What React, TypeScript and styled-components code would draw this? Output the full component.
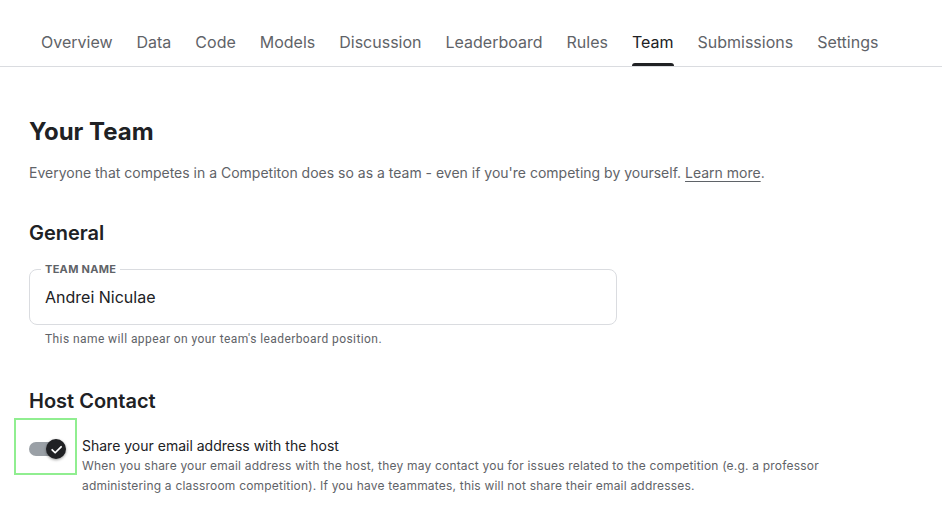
import React from "react";
import styled, { createGlobalStyle } from "styled-components";

const Global = createGlobalStyle`
  html, body { margin: 0; padding: 0; background: #fff; }
  body { font-family: Inter, "Noto Sans", sans-serif; color: #202124; }
  * { box-sizing: border-box; }
`;

const Page = styled.div`
  width: 942px;
  height: 525px;
  overflow: hidden;
  background: #fff;
`;

const TabBar = styled.nav`
  display: flex;
  align-items: stretch;
  height: 67px;
  padding: 0 0 0 41px;
  gap: 24px;
  border-bottom: 1px solid #dadce0;
`;

const Tab = styled.div<{ $active?: boolean }>`
  position: relative;
  display: flex;
  align-items: center;
  padding-top: 18px;
  font-size: 16px;
  color: ${(p) => (p.$active ? "#202124" : "#5f6368")};
  white-space: nowrap;
  &::after {
    content: "";
    display: ${(p) => (p.$active ? "block" : "none")};
    position: absolute;
    left: 0;
    right: 0;
    bottom: 0;
    height: 3px;
    border-radius: 3px 3px 0 0;
    background: #202124;
  }
`;

const Content = styled.main`
  padding: 49px 29px 0 29px;
  display: flex;
  flex-direction: column;
`;

const Title = styled.h1`
  margin: 0;
  font-size: 24px;
  line-height: 32px;
  font-weight: 700;
  color: #202124;
`;

const Lead = styled.p`
  margin: 15px 0 0;
  font-size: 14px;
  line-height: 20px;
  color: #5f6368;
`;

const LearnMore = styled.a`
  color: #5f6368;
  text-decoration: underline;
  text-underline-offset: 3px;
  text-decoration-color: #5f6368;
`;

const SectionTitle = styled.h2<{ $mt: number }>`
  margin: ${(p) => p.$mt}px 0 0;
  font-size: 20px;
  line-height: 24px;
  font-weight: 600;
  color: #202124;
`;

const Field = styled.fieldset`
  margin: 17px 0 0;
  width: 588px;
  height: 63px;
  padding: 0 15px;
  border: 1px solid #dadce0;
  border-radius: 8px;
`;

const Legend = styled.legend`
  padding: 0 4px;
  margin-left: -4px;
  font-size: 11px;
  font-weight: 700;
  letter-spacing: 0.3px;
  color: #5f6368;
  text-transform: uppercase;
  line-height: 14px;
`;

const Value = styled.div`
  font-size: 16px;
  line-height: 20px;
  color: #202124;
  padding-top: 11px;
`;

const Helper = styled.div`
  margin: 6px 0 0 16px;
  font-family: Roboto, Inter, sans-serif;
  font-size: 12px;
  line-height: 16px;
  letter-spacing: 0.42px;
  color: #5f6368;
`;

const ToggleRow = styled.div`
  display: flex;
  align-items: flex-start;
  margin-top: 5px;
  margin-left: -15px;
`;

const Focus = styled.div`
  width: 63px;
  height: 57px;
  border: 2px solid #90ee90;
  display: flex;
  align-items: center;
  justify-content: flex-end;
  padding-right: 10px;
  padding-top: 5px;
  flex-shrink: 0;
`;

const Track = styled.div`
  position: relative;
  width: 32px;
  height: 14px;
  border-radius: 7px;
  background: #9aa0a6;
  margin-right: 4px;
`;

const Knob = styled.div`
  position: absolute;
  right: -5px;
  top: -3px;
  width: 20px;
  height: 20px;
  border-radius: 50%;
  background: #202124;
  box-shadow: 0 1px 3px rgba(0, 0, 0, 0.4);
  display: flex;
  align-items: center;
  justify-content: center;
`;

const ToggleText = styled.div`
  margin-left: 5px;
  padding-top: 19px;
  display: flex;
  flex-direction: column;
`;

const ToggleLabel = styled.div`
  font-size: 14px;
  line-height: 18px;
  color: #202124;
`;

const ToggleDesc = styled.div`
  margin-top: 1px;
  width: 745px;
  font-size: 12px;
  line-height: 20px;
  letter-spacing: 0.2px;
  color: #5f6368;
`;

const tabs = [
  "Overview",
  "Data",
  "Code",
  "Models",
  "Discussion",
  "Leaderboard",
  "Rules",
  "Team",
  "Submissions",
  "Settings",
];

export default function App() {
  return (
    <Page>
      <Global />
      <TabBar>
        {tabs.map((t) => (
          <Tab key={t} $active={t === "Team"}>
            {t}
          </Tab>
        ))}
      </TabBar>
      <Content>
        <Title>Your Team</Title>
        <Lead>
          Everyone that competes in a Competiton does so as a team - even if
          you're competing by yourself. <LearnMore>Learn more</LearnMore>.
        </Lead>
        <SectionTitle $mt={38}>General</SectionTitle>
        <Field>
          <Legend>Team name</Legend>
          <Value>Andrei Niculae</Value>
        </Field>
        <Helper>This name will appear on your team's leaderboard position.</Helper>
        <SectionTitle $mt={42}>Host Contact</SectionTitle>
        <ToggleRow>
          <Focus>
            <Track>
              <Knob>
                <svg width="13" height="13" viewBox="0 0 24 24" fill="none">
                  <path
                    d="M4 12.5l5.5 5.5L20.5 7"
                    stroke="#fff"
                    strokeWidth="3.2"
                    strokeLinecap="round"
                    strokeLinejoin="round"
                  />
                </svg>
              </Knob>
            </Track>
          </Focus>
          <ToggleText>
            <ToggleLabel>Share your email address with the host</ToggleLabel>
            <ToggleDesc>
              When you share your email address with the host, they may contact
              you for issues related to the competition (e.g. a professor
              administering a classroom competition). If you have teammates,
              this will not share their email addresses.
            </ToggleDesc>
          </ToggleText>
        </ToggleRow>
      </Content>
    </Page>
  );
}
